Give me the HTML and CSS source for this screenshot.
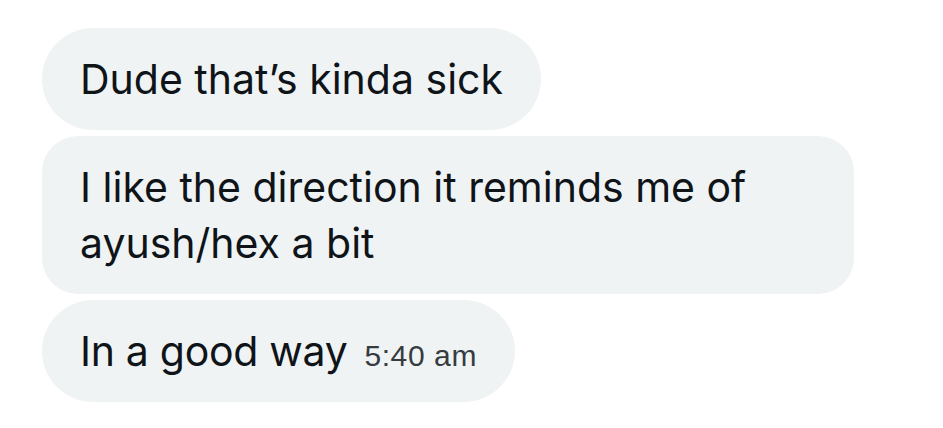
FILE: index.html
```html
<!DOCTYPE html>
<html>
<head>
<meta charset="utf-8">
<link rel="stylesheet" href="styles.css">
</head>
<body>
<div class="thread">
  <div class="bubble pill">Dude that’s kinda sick</div>
  <div class="bubble multi">I like the direction it reminds me of<br>ayush/hex a bit</div>
  <div class="bubble pill last">In a good way<span class="time">5:40 am</span></div>
</div>
</body>
</html>
```
FILE: styles.css
```css
html, body {
  margin: 0;
  padding: 0;
  background: #ffffff;
}
.thread {
  display: flex;
  flex-direction: column;
  align-items: flex-start;
  gap: 6px;
  padding: 28px 0 0 42px;
}
.bubble {
  background: #eff3f4;
  color: #0f1419;
  font-family: "Inter", "Roboto", sans-serif;
  font-size: 41px;
  line-height: 56px;
  padding: 23px 38px 23px 38px;
  border-radius: 51px;
}
.multi {
  border-radius: 36px;
  width: 736px;
}
.last {
  letter-spacing: -0.3px;
}
.time {
  font-family: "Liberation Sans", "Roboto", sans-serif;
  font-size: 30px;
  line-height: 1;
  letter-spacing: 0.6px;
  color: #363b40;
  margin-left: 17px;
}
```
